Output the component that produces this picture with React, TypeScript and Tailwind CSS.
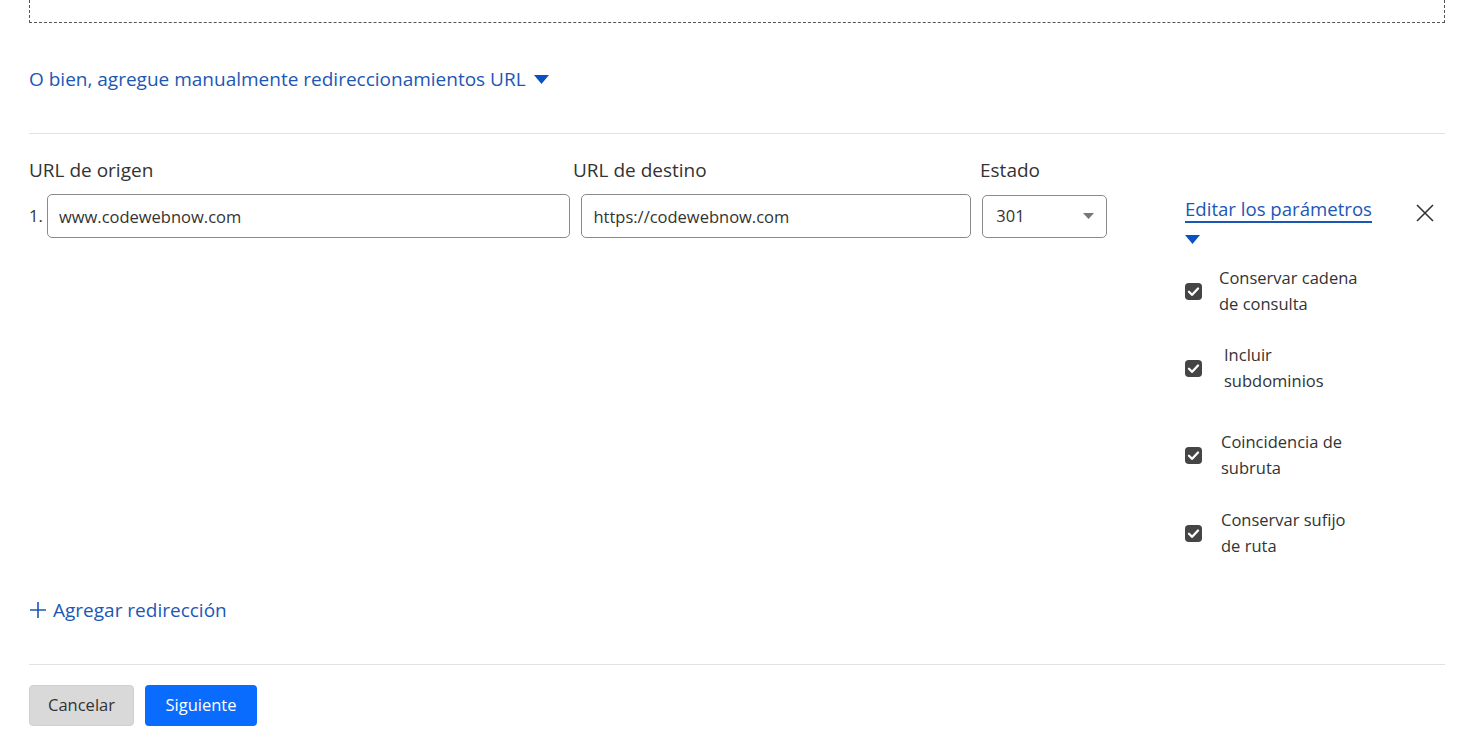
import { useState } from "react";

const font = { fontFamily: '"Open Sans", "Noto Sans", "Liberation Sans", sans-serif' };

function Caret({ className = "" }: { className?: string }) {
  return (
    <svg width="15" height="9" viewBox="0 0 15 9" className={className}>
      <path d="M0 0 H15 L7.5 9 Z" fill="currentColor" />
    </svg>
  );
}

function CheckIcon() {
  return (
    <svg width="17" height="17" viewBox="0 0 18 18" className="shrink-0">
      <rect x="0" y="0" width="18" height="18" rx="4" fill="#454545" />
      <path d="M4.2 9.3 L7.6 12.5 L13.8 5.8" fill="none" stroke="#fff" strokeWidth="2.4" strokeLinecap="round" strokeLinejoin="round" />
    </svg>
  );
}

const options = [
  { label: "Conservar cadena de consulta", mt: "mt-[21px]", pl: "pl-[17px]" },
  { label: "Incluir subdominios", mt: "mt-[25px]", pl: "pl-[22px]" },
  { label: "Coincidencia de subruta", mt: "mt-[35px]", pl: "pl-[19px]" },
  { label: "Conservar sufijo de ruta", mt: "mt-[26px]", pl: "pl-[19px]" },
];

export default function App() {
  const [origin, setOrigin] = useState("www.codewebnow.com");
  const [target, setTarget] = useState("https://codewebnow.com");

  return (
    <div style={font} className="min-h-screen bg-white pl-[29px] pr-[12px] text-[#313131]">
      <div className="h-[23px] border border-t-0 border-dashed border-[#555]" />

      <button className="mt-[44px] flex items-center gap-[8px] text-[19px] leading-[24px] text-[#1b57b5]">
        O bien, agregue manualmente redireccionamientos URL
        <Caret className="mt-[1px] text-[#0a52c4]" />
      </button>

      <div className="mt-[42px] border-t border-[#e2e2e2]" />

      <div className="flex">
        <div className="w-[1078px]">
          <div className="mt-[24px] flex text-[19px] leading-[24px] text-[#333]">
            <span className="w-[544px]">URL de origen</span>
            <span className="w-[407px]">URL de destino</span>
            <span>Estado</span>
          </div>
          <div className="mt-[12px] flex items-center">
            <span className="w-[18px] text-[16.5px] text-[#333]">1.</span>
            <input
              value={origin}
              onChange={(e) => setOrigin(e.target.value)}
              className="h-[44px] w-[525px] rounded-[5px] border border-[#8a8a8a] px-[11px] text-[16.5px] text-[#333] outline-none"
            />
            <input
              value={target}
              onChange={(e) => setTarget(e.target.value)}
              className="ml-[11px] h-[44px] w-[391px] rounded-[5px] border border-[#8a8a8a] px-[11px] text-[16.5px] text-[#333] outline-none"
            />
            <div className="ml-[11px] flex h-[43px] w-[125px] items-center justify-between rounded-[5px] border border-[#8a8a8a] pl-[13px] pr-[12px] text-[16.5px] text-[#333]">
              301
              <svg width="11" height="6" viewBox="0 0 11 6">
                <path d="M0 0 H11 L5.5 6 Z" fill="#777" />
              </svg>
            </div>
          </div>
        </div>

        <div className="ml-[78px] mt-[64px] flex-1">
          <div className="flex items-start justify-between">
            <div>
              <a className="block border-b-2 border-[#1b57b5] pb-[1px] text-[18.6px] leading-[22px] text-[#1b57b5]">
                Editar los parámetros
              </a>
              <Caret className="mt-[12px] text-[#0a52c4]" />
            </div>
            <svg width="18" height="18" viewBox="0 0 18 18" className="mr-[11px] mt-[6px]">
              <path d="M1 1 L17 17 M17 1 L1 17" stroke="#333" strokeWidth="1.6" />
            </svg>
          </div>
          {options.map((o) => (
            <div key={o.label} className={`flex items-center ${o.mt}`}>
              <CheckIcon />
              <span className={`w-[160px] text-[16.5px] leading-[26px] text-[#333] ${o.pl}`}>{o.label}</span>
            </div>
          ))}
        </div>
      </div>

      <button className="mt-[39px] flex items-center gap-[6px] text-[19px] leading-[24px] text-[#1b57b5]">
        <svg width="18" height="18" viewBox="0 0 18 18">
          <path d="M9 1 V17 M1 9 H17" stroke="#1b57b5" strokeWidth="1.6" />
        </svg>
        Agregar redirección
      </button>

      <div className="mt-[42px] border-t border-[#e2e2e2]" />

      <div className="mt-[20px] flex gap-[11px]">
        <button className="h-[41px] w-[105px] rounded-[4px] border border-[#cfcfcf] bg-[#d9d9d9] text-[16.5px] text-[#333]">
          Cancelar
        </button>
        <button className="h-[41px] w-[112px] rounded-[4px] bg-[#0a6cff] text-[16.5px] text-white">
          Siguiente
        </button>
      </div>
    </div>
  );
}
